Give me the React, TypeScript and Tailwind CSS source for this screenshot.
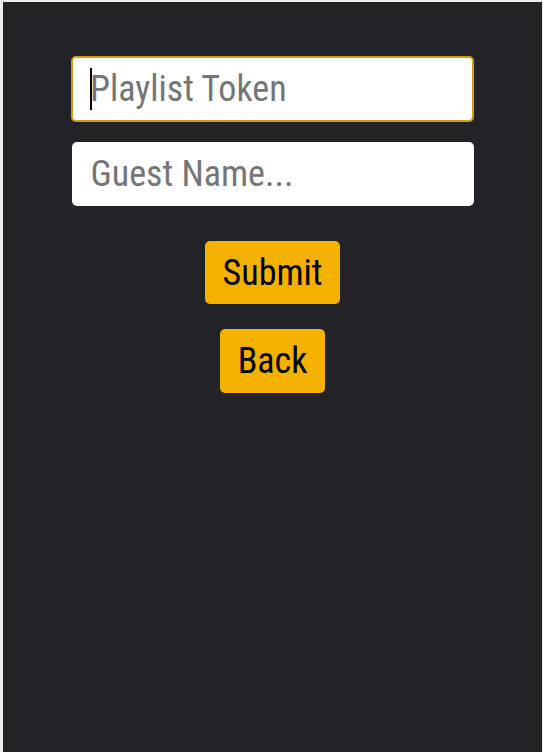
import React from "react";

export default function App() {
  return (
    <div className="w-[543px] h-[752px] bg-[#ececec] pl-[3px] pt-[2px] pr-px">
      <div className="h-full bg-[#222326] flex flex-col items-center pt-[54px] font-['Roboto_Condensed','Liberation_Sans_Narrow',Roboto,sans-serif]">
        <div className="relative">
          <input
            autoFocus
            placeholder="Playlist Token"
            className="w-[403px] h-[66px] bg-white rounded-[5px] border-2 border-[#d19b12] px-[17px] text-[36px] text-black placeholder:text-[#757575] outline-none caret-transparent font-['Roboto_Condensed','Liberation_Sans_Narrow',Roboto,sans-serif]"
          />
          <span className="absolute left-[19px] top-[12px] w-[2px] h-[42px] bg-black" />
        </div>
        <input
          placeholder="Guest Name..."
          className="mt-[20px] w-[402px] h-[64px] bg-white rounded-[5px] px-[19px] text-[36px] text-black placeholder:text-[#757575] outline-none font-['Roboto_Condensed','Liberation_Sans_Narrow',Roboto,sans-serif]"
        />
        <button className="mt-[35px] h-[63px] px-[18px] bg-[#f4b100] rounded-[5px] text-[36px] text-black font-['Roboto_Condensed','Liberation_Sans_Narrow',Roboto,sans-serif]">
          Submit
        </button>
        <button className="mt-[25px] h-[64px] px-[18px] bg-[#f4b100] rounded-[5px] text-[36px] text-black font-['Roboto_Condensed','Liberation_Sans_Narrow',Roboto,sans-serif]">
          Back
        </button>
      </div>
    </div>
  );
}
